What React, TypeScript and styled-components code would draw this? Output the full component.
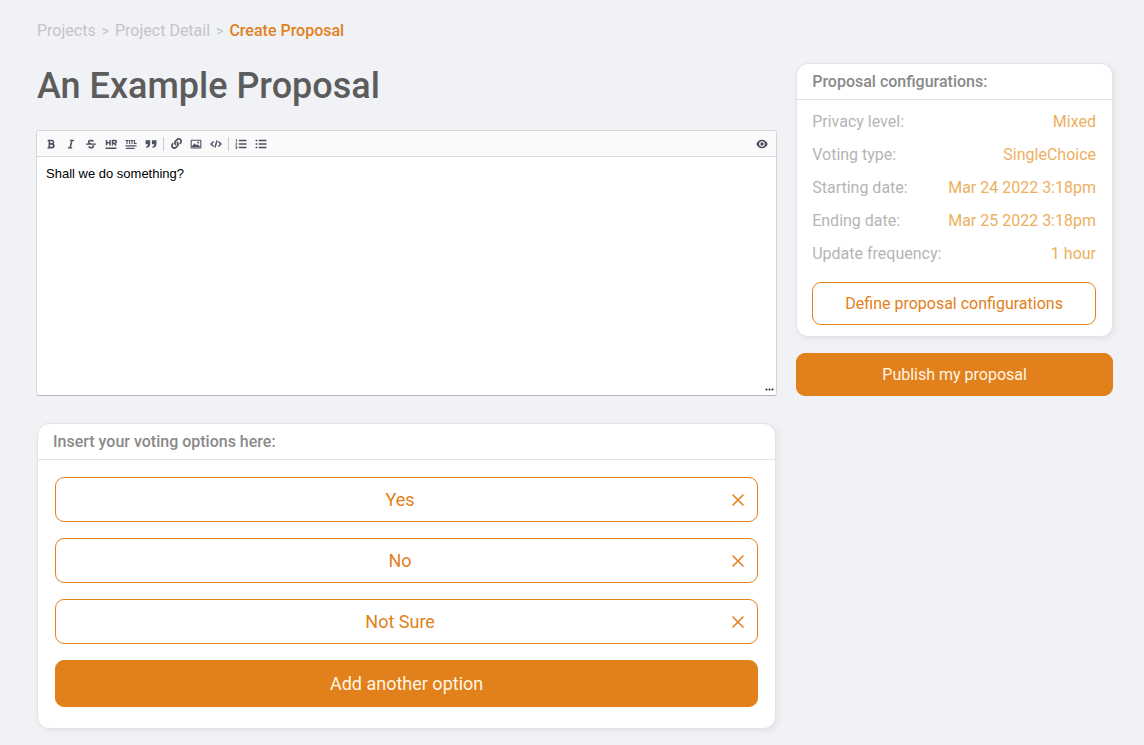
import React, { useState } from "react";
import styled, { createGlobalStyle, css } from "styled-components";
import { FaBold, FaItalic, FaStrikethrough, FaLink } from "react-icons/fa";

const orange = "#e2801c";
const line = "#e3e3e4";

const GlobalStyle = createGlobalStyle`
  * { box-sizing: border-box; }
  body {
    margin: 0;
    background: #f1f2f6;
    font-family: Roboto, "Liberation Sans", sans-serif;
    font-size: 16px;
    line-height: 20px;
  }
  button, input, textarea { font-family: inherit; font-size: inherit; line-height: inherit; }
`;

const Page = styled.div`
  padding: 21px 31px 16px 37px;
`;

const Breadcrumb = styled.nav`
  display: flex;
  gap: 6px;
  color: #c2c2c4;
`;

const Crumb = styled.a<{ $current?: boolean }>`
  color: ${(p) => (p.$current ? orange : "#c4c4c6")};
  font-weight: ${(p) => (p.$current ? 500 : 400)};
  text-decoration: none;
`;

const Chevron = styled.span`
  font-size: 14px;
`;

const Columns = styled.div`
  display: grid;
  grid-template-columns: minmax(0, 7fr) minmax(0, 3fr);
  column-gap: 20px;
  align-items: start;
  margin-top: 22px;
`;

const Title = styled.h1`
  margin: 0 0 21px;
  color: #5c5c5c;
  font-size: 36px;
  font-weight: 500;
  line-height: 46px;
`;

const Editor = styled.section`
  display: flex;
  flex-direction: column;
  margin: 0 -1px;
  background: #fff;
  border: 1px solid #d5d6da;
  border-bottom-color: #b4b5b8;
  border-radius: 3px;
  overflow: hidden;
`;

const Toolbar = styled.div`
  display: flex;
  align-items: center;
  height: 26px;
  padding: 0 4px;
  background: #fafafa;
  border-bottom: 1px solid #d9dadc;
`;

const ToolGroup = styled.div<{ $end?: boolean }>`
  display: flex;
  align-items: center;
  ${(p) => p.$end && css`margin-left: auto;`}
`;

const ToolButton = styled.button`
  display: flex;
  align-items: center;
  justify-content: center;
  width: 20px;
  height: 20px;
  padding: 0;
  border: 0;
  background: none;
  color: #4b5160;
  cursor: pointer;
`;

const Separator = styled.span`
  width: 1px;
  height: 14px;
  margin: 0 2px;
  background: #c8cacf;
`;

const EditorBody = styled.div`
  position: relative;
`;

const EditorText = styled.textarea`
  display: block;
  width: 100%;
  height: 238px;
  padding: 8px 9px;
  border: 0;
  outline: 0;
  resize: none;
  background: transparent;
  color: #000;
  font-family: "Liberation Sans", Arial, sans-serif;
  font-size: 13px;
  line-height: 18px;
`;

const Grip = styled.svg`
  position: absolute;
  right: 2px;
  bottom: 4px;
`;

const Card = styled.section`
  background: #fff;
  border: 1px solid ${line};
  border-radius: 12px;
  box-shadow: 2px 2px 6px rgba(0, 0, 0, 0.06);
`;

const CardTitle = styled.h2`
  margin: 0;
  padding: 8px 15px 7px;
  border-bottom: 1px solid ${line};
  color: #8a8a8a;
  font-size: 16px;
  font-weight: 500;
  line-height: 20px;
`;

const VotingCard = styled(Card)`
  margin-top: 27px;
`;

const OptionList = styled.div`
  display: grid;
  gap: 16px;
  padding: 17px 17px 21px;
`;

const Option = styled.div`
  display: flex;
  align-items: center;
  height: 45px;
  padding: 0 9px 0 16px;
  border: 1px solid ${orange};
  border-radius: 9px;
  color: ${orange};
`;

const OptionInput = styled.input`
  flex: 1;
  min-width: 0;
  padding: 0;
  border: 0;
  outline: 0;
  background: none;
  color: inherit;
  font-size: 18px;
  line-height: 24px;
  text-align: center;
`;

const RemoveButton = styled.button`
  display: flex;
  align-items: center;
  justify-content: center;
  width: 20px;
  height: 20px;
  padding: 0;
  border: 0;
  background: none;
  color: inherit;
  cursor: pointer;
`;

const Button = styled.button<{ $outline?: boolean; $large?: boolean }>`
  width: 100%;
  height: ${(p) => (p.$large ? 47 : 43)}px;
  padding: 0 16px;
  border: 1px solid ${orange};
  border-radius: 9px;
  background: ${(p) => (p.$outline ? "#fff" : orange)};
  color: ${(p) => (p.$outline ? orange : "#fff6e6")};
  font-size: ${(p) => (p.$large ? 18 : 16)}px;
  cursor: pointer;
`;

const Side = styled.aside`
  display: grid;
  gap: 16px;
`;

const ConfigBody = styled.div`
  padding: 12px 16px 11px 15px;
`;

const ConfigList = styled.dl`
  display: grid;
  gap: 13px;
  margin: 0 0 18px;
`;

const ConfigRow = styled.div`
  display: flex;
  justify-content: space-between;
`;

const ConfigLabel = styled.dt`
  color: #b5b5b5;
`;

const ConfigValue = styled.dd`
  margin: 0;
  color: #edb060;
`;

const HrIcon = () => (
  <svg width="12" height="12" viewBox="0 0 12 12" fill="none" stroke="currentColor" strokeWidth="1.5">
    <path d="M1.5 2v5.6M5 2v5.6M1.5 4.8H5M7.5 7.6V2.6H10a1.2 1.2 0 0 1 0 2.6H7.5M9.2 5.2l1.9 2.4M0.5 10.2h11" />
  </svg>
);

const TitleIcon = () => (
  <svg width="12" height="12" viewBox="0 0 12 12" fill="none" stroke="currentColor">
    <path strokeWidth="1.1" d="M0.5 2.5h3M2 2.5V6M4.5 2v4M5.5 2.5h3M7 2.5V6M9.4 2v3.5h2.2" />
    <path strokeWidth="1.2" d="M0.5 7.8h11M1 10.3h8.500" />
  </svg>
);

const QuoteIcon = () => (
  <svg width="12" height="12" viewBox="0 0 12 12" fill="currentColor">
    <path d="M0.600 2.200H5.200V5.600C5.200 8.200 4 9.700 1.300 10V8.400C2.600 8 3 7.300 3 6.300H0.600zM6.900 2.200H11.500V5.600C11.500 8.200 10.300 9.700 7.600 10V8.400C8.900 8 9.300 7.300 9.300 6.300H6.900z" />
  </svg>
);

const ImageIcon = () => (
  <svg width="12" height="12" viewBox="0 0 12 12">
    <rect x="1.200" y="2.200" width="9.600" height="7.800" rx="0.500" fill="none" stroke="currentColor" strokeWidth="1.100" />
    <path fill="currentColor" d="M2 9.300V8.200L4.500 5.200L6.300 7.200L7.400 6.300L10 8.600V9.300z" />
    <circle cx="8.200" cy="4.500" r="1" fill="currentColor" />
  </svg>
);

const CodeIcon = () => (
  <svg width="12" height="12" viewBox="0 0 12 12" fill="none" stroke="currentColor" strokeWidth="1.400">
    <path d="M3.700 3.400L1 6l2.700 2.600M8.300 3.400L11 6 8.300 8.600M6.900 2.500L5.100 9.500" />
  </svg>
);

const OrderedIcon = () => (
  <svg width="12" height="12" viewBox="0 0 12 12" fill="none" stroke="currentColor">
    <path strokeWidth="1.600" d="M3.800 2.500h7.700M3.800 6h7.700M3.800 9.500h7.700" />
    <path strokeWidth="0.800" d="M0.700 1.500h0.800v2.300M0.500 5h1.300v0.800L0.700 7h1.300M0.500 8.300h1.300v2.400H0.500M0.800 9.500h1" />
  </svg>
);

const UnorderedIcon = () => (
  <svg width="12" height="12" viewBox="0 0 12 12" fill="none" stroke="currentColor" strokeWidth="1.600">
    <path d="M3.800 2.500h7.700M3.800 6h7.700M3.800 9.500h7.700M0.600 2.500h1.800M0.600 6h1.800M0.600 9.500h1.800" />
  </svg>
);

const EyeIcon = () => (
  <svg width="12" height="12" viewBox="0 0 12 12">
    <path fill="currentColor" fillRule="evenodd" d="M6 1.800C3.300 1.800 1.300 3.500 0.300 6C1.300 8.500 3.300 10.200 6 10.200S10.700 8.500 11.700 6C10.700 3.500 8.700 1.800 6 1.800zM6 3.200A2.800 2.800 0 1 1 6 8.800A2.800 2.800 0 1 1 6 3.200z" />
    <circle cx="6" cy="6" r="1.700" fill="currentColor" />
  </svg>
);

const CloseIcon = () => (
  <svg width="12" height="12" viewBox="0 0 12 12" fill="none" stroke="currentColor" strokeWidth="1.600" strokeLinecap="round">
    <path d="M1 1l10 10M11 1L1 11" />
  </svg>
);

const toolGroups = [
  [
    { label: "Bold", icon: <FaBold size={10} /> },
    { label: "Italic", icon: <FaItalic size={10} /> },
    { label: "Strikethrough", icon: <FaStrikethrough size={10} /> },
    { label: "Horizontal rule", icon: <HrIcon /> },
    { label: "Title", icon: <TitleIcon /> },
    { label: "Quote", icon: <QuoteIcon /> },
  ],
  [
    { label: "Link", icon: <FaLink size={11} /> },
    { label: "Image", icon: <ImageIcon /> },
    { label: "Code", icon: <CodeIcon /> },
  ],
  [
    { label: "Ordered list", icon: <OrderedIcon /> },
    { label: "Unordered list", icon: <UnorderedIcon /> },
  ],
];

const config = [
  ["Privacy level:", "Mixed"],
  ["Voting type:", "SingleChoice"],
  ["Starting date:", "Mar 24 2022 3:18pm"],
  ["Ending date:", "Mar 25 2022 3:18pm"],
  ["Update frequency:", "1 hour"],
];

export default function App() {
  const [body, setBody] = useState("Shall we do something?");
  const [options, setOptions] = useState(["Yes", "No", "Not Sure"]);

  return (
    <>
      <GlobalStyle />
      <Page>
        <Breadcrumb aria-label="Breadcrumb">
          <Crumb href="#projects">Projects</Crumb>
          <Chevron>&gt;</Chevron>
          <Crumb href="#detail">Project Detail</Crumb>
          <Chevron>&gt;</Chevron>
          <Crumb href="#create" $current aria-current="page">Create Proposal</Crumb>
        </Breadcrumb>
        <Columns>
          <main>
            <Title>An Example Proposal</Title>
            <Editor>
              <Toolbar>
                {toolGroups.map((group, i) => (
                  <React.Fragment key={i}>
                    {i > 0 && <Separator />}
                    <ToolGroup>
                      {group.map((tool) => (
                        <ToolButton key={tool.label} type="button" aria-label={tool.label}>
                          {tool.icon}
                        </ToolButton>
                      ))}
                    </ToolGroup>
                  </React.Fragment>
                ))}
                <ToolGroup $end>
                  <ToolButton type="button" aria-label="Preview">
                    <EyeIcon />
                  </ToolButton>
                </ToolGroup>
              </Toolbar>
              <EditorBody>
                <EditorText
                  aria-label="Proposal description"
                  value={body}
                  onChange={(e) => setBody(e.target.value)}
                />
                <Grip width="9" height="3" viewBox="0 0 9 3" fill="#222">
                  <circle cx="1.5" cy="1.5" r="1" />
                  <circle cx="4.5" cy="1.5" r="1" />
                  <circle cx="7.5" cy="1.5" r="1" />
                </Grip>
              </EditorBody>
            </Editor>
            <VotingCard>
              <CardTitle>Insert your voting options here:</CardTitle>
              <OptionList>
                {options.map((option, i) => (
                  <Option key={i}>
                    <OptionInput
                      aria-label={`Option ${i + 1}`}
                      value={option}
                      onChange={(e) =>
                        setOptions(options.map((o, j) => (j === i ? e.target.value : o)))
                      }
                    />
                    <RemoveButton
                      type="button"
                      aria-label={`Remove ${option}`}
                      onClick={() => setOptions(options.filter((_, j) => j !== i))}
                    >
                      <CloseIcon />
                    </RemoveButton>
                  </Option>
                ))}
                <Button $large type="button" onClick={() => setOptions([...options, ""])}>
                  Add another option
                </Button>
              </OptionList>
            </VotingCard>
          </main>
          <Side>
            <Card>
              <CardTitle>Proposal configurations:</CardTitle>
              <ConfigBody>
                <ConfigList>
                  {config.map(([label, value]) => (
                    <ConfigRow key={label}>
                      <ConfigLabel>{label}</ConfigLabel>
                      <ConfigValue>{value}</ConfigValue>
                    </ConfigRow>
                  ))}
                </ConfigList>
                <Button $outline type="button">Define proposal configurations</Button>
              </ConfigBody>
            </Card>
            <Button type="button">Publish my proposal</Button>
          </Side>
        </Columns>
      </Page>
    </>
  );
}
